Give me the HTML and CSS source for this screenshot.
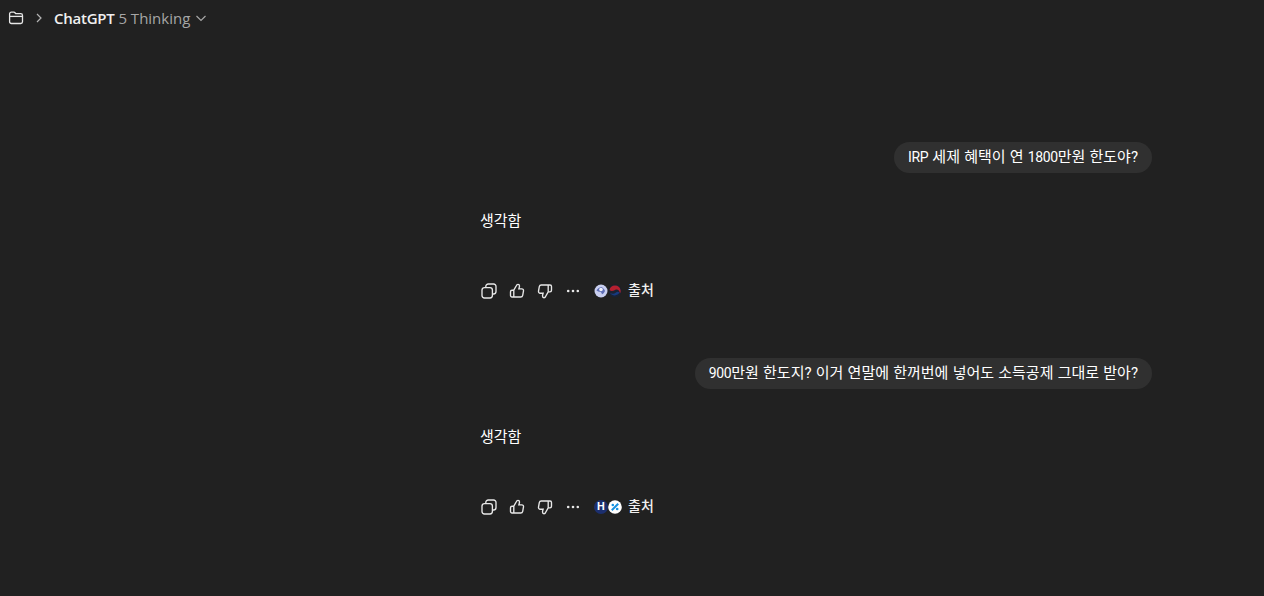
FILE: index.html
```html
<!DOCTYPE html>
<html lang="ko">
<head>
    <meta charset="UTF-8">
    <meta name="viewport" content="width=device-width, initial-scale=1.0">
    <title>ChatGPT</title>
    <link rel="stylesheet" href="styles.css">
</head>
<body>
    <header class="topbar">
        <svg class="folder" width="16" height="16" viewBox="0 0 16 16" fill="none" stroke="currentColor" stroke-width="1.3">
            <path d="M1.600 5V4a1.800 1.800 0 0 1 1.800-1.800h2.400c.6 0 1 .3 1.400.8l.5.7h5a1.800 1.800 0 0 1 1.800 1.800v6.200a1.800 1.800 0 0 1-1.800 1.800H3.400a1.800 1.800 0 0 1-1.800-1.800z"/>
            <path d="M1.600 6.400h12.800"/>
        </svg>
        <svg class="crumb" width="12" height="12" viewBox="0 0 12 12" fill="none" stroke="currentColor" stroke-width="1.2">
            <path d="M4 2l4 4-4 4"/>
        </svg>
        <span class="model"><b>ChatGPT</b> 5 Thinking</span>
        <svg class="caret" width="12" height="12" viewBox="0 0 12 12" fill="none" stroke="currentColor" stroke-width="1.2">
            <path d="M1.500 4l4.500 4.500L10.500 4"/>
        </svg>
    </header>

    <main class="thread">
        <section class="turn">
            <div class="user-row"><div class="bubble"><span class="latin">IRP</span> 세제 혜택이 연 <span class="latin">1800</span>만원 한도야?</div></div>
            <p class="thought">생각함</p>
            <div class="actions">
                <button class="icon-btn">
                    <svg width="16" height="16" viewBox="0 0 16 16" fill="none" stroke="currentColor" stroke-width="1.35"><rect x="1" y="4.600" width="10.400" height="10.400" rx="2.400"/><path d="M4.800 4.600V3.400A2.400 2.400 0 0 1 7.200 1h5.400A2.400 2.400 0 0 1 15 3.400v5.200a2.400 2.400 0 0 1-2.400 2.400h-1.200"/></svg>
                </button>
                <button class="icon-btn">
                    <svg width="16" height="16" viewBox="0 0 16 16" fill="none" stroke="currentColor" stroke-width="1.35"><path d="M4.800 7.200 7.300 2.800c.3-.9 1-1.500 1.700-1.500 1 0 1.500.8 1.500 1.800 0 .9-.3 1.800-.6 2.700h2.900c1.100 0 1.900 1 1.700 2.100l-.8 4.400c-.2 1-1 1.700-2 1.700H3a1.500 1.500 0 0 1-1.500-1.500V8.700A1.500 1.500 0 0 1 3 7.200h1.800v7.300"/></svg>
                </button>
                <button class="icon-btn">
                    <svg width="16" height="16" viewBox="0 0 16 16" fill="none" stroke="currentColor" stroke-width="1.35"><path d="M11.200 8.800 8.700 13.200c-.3.900-1 1.500-1.700 1.500-1 0-1.500-.8-1.500-1.800 0-.9.3-1.800.6-2.700H3.200c-1.100 0-1.900-1-1.700-2.100l.8-4.400c.2-1 1-1.700 2-1.700H13a1.500 1.500 0 0 1 1.500 1.500v3.800A1.500 1.500 0 0 1 13 8.800h-1.800V1.500"/></svg>
                </button>
                <button class="icon-btn">
                    <svg width="16" height="16" viewBox="0 0 16 16" fill="currentColor"><circle cx="3.200" cy="8" r="1.300"/><circle cx="8" cy="8" r="1.300"/><circle cx="12.800" cy="8" r="1.300"/></svg>
                </button>
                <button class="sources">
                    <span class="favicons">
                        <svg class="fav" width="14" height="14" viewBox="0 0 14 14"><circle cx="7" cy="7" r="6.500" fill="#c9cff0"/><path d="M2.500 6.500C3.500 4.500 5 3.500 7.500 3c1.500 1 3 2 3.500 4-.8 2-2 3-3 3.200C7.500 8.800 7 8 6 7.800S3.500 7.500 2.500 6.500z" fill="#5f6fb8"/><circle cx="7" cy="5.500" r="1.800" fill="#f2f3fb"/></svg>
                        <svg class="fav" width="14" height="14" viewBox="0 0 14 14"><circle cx="7" cy="7" r="6.500" fill="#1a2233"/><path d="M1.500 6A5.600 5.600 0 0 1 12.500 6c.4 1.500 0 2.500-.6 3.500-.2-3-2.500-4.700-4.900-3.500C5 7 3 7.500 1.500 6z" fill="#b5202f"/><path d="M2 9c2 1.300 4.500.8 6-.6 1-.9 2.500-.8 3.500.2A5.600 5.600 0 0 1 2 9z" fill="#173a80"/></svg>
                    </span>
                    <span class="sources-label">출처</span>
                </button>
            </div>
        </section>

        <section class="turn">
            <div class="user-row"><div class="bubble"><span class="latin">900</span>만원 한도지? 이거 연말에 한꺼번에 넣어도 소득공제 그대로 받아?</div></div>
            <p class="thought">생각함</p>
            <div class="actions">
                <button class="icon-btn">
                    <svg width="16" height="16" viewBox="0 0 16 16" fill="none" stroke="currentColor" stroke-width="1.35"><rect x="1" y="4.600" width="10.400" height="10.400" rx="2.400"/><path d="M4.800 4.600V3.400A2.400 2.400 0 0 1 7.200 1h5.400A2.400 2.400 0 0 1 15 3.400v5.200a2.400 2.400 0 0 1-2.400 2.400h-1.200"/></svg>
                </button>
                <button class="icon-btn">
                    <svg width="16" height="16" viewBox="0 0 16 16" fill="none" stroke="currentColor" stroke-width="1.35"><path d="M4.800 7.200 7.300 2.800c.3-.9 1-1.500 1.700-1.500 1 0 1.500.8 1.500 1.800 0 .9-.3 1.800-.6 2.700h2.900c1.100 0 1.900 1 1.700 2.100l-.8 4.400c-.2 1-1 1.700-2 1.700H3a1.500 1.500 0 0 1-1.500-1.500V8.700A1.500 1.500 0 0 1 3 7.200h1.800v7.300"/></svg>
                </button>
                <button class="icon-btn">
                    <svg width="16" height="16" viewBox="0 0 16 16" fill="none" stroke="currentColor" stroke-width="1.35"><path d="M11.200 8.800 8.700 13.200c-.3.900-1 1.500-1.700 1.500-1 0-1.500-.8-1.500-1.800 0-.9.3-1.800.6-2.700H3.200c-1.100 0-1.900-1-1.700-2.100l.8-4.400c.2-1 1-1.700 2-1.700H13a1.500 1.500 0 0 1 1.500 1.500v3.800A1.500 1.500 0 0 1 13 8.800h-1.800V1.500"/></svg>
                </button>
                <button class="icon-btn">
                    <svg width="16" height="16" viewBox="0 0 16 16" fill="currentColor"><circle cx="3.200" cy="8" r="1.300"/><circle cx="8" cy="8" r="1.300"/><circle cx="12.800" cy="8" r="1.300"/></svg>
                </button>
                <button class="sources">
                    <span class="favicons">
                        <span class="fav fav-h">H</span>
                        <svg class="fav" width="14" height="14" viewBox="0 0 14 14"><circle cx="7" cy="7" r="6.800" fill="#fff"/><path d="M3.800 10.200l6.400-6.400" stroke="#1590e0" stroke-width="2"/><circle cx="4.800" cy="5" r="1.300" fill="#1590e0"/><circle cx="9.200" cy="9" r="1.300" fill="#1590e0"/></svg>
                    </span>
                    <span class="sources-label">출처</span>
                </button>
            </div>
        </section>
    </main>
</body>
</html>
```

FILE: styles.css
```css
body {
    margin: 0;
    height: 596px;
    overflow: hidden;
    background-color: #212121;
    color: #fff;
    font-family: Roboto, "Noto Sans CJK KR", sans-serif;
    font-size: 15px;
}

.topbar {
    display: flex;
    align-items: center;
    height: 36px;
    padding-left: 8px;
    color: #e8e8e8;
}

.crumb {
    margin-left: 9px;
    color: #b4b4b4;
}

.model {
    margin-left: 9px;
    font-family: "Open Sans", sans-serif;
    font-size: 15px;
    color: #a6a6a6;
}

.model b {
    font-weight: 600;
    letter-spacing: -0.25px;
    color: #f0f0f0;
}

.caret {
    margin-left: 5px;
    color: #a6a6a6;
}

.thread {
    width: 672px;
    margin-left: 480px;
    padding-top: 106px;
}

.turn {
    height: 216px;
}

.user-row {
    display: flex;
    justify-content: flex-end;
}

.bubble {
    height: 31px;
    line-height: 30px;
    padding: 0 14px;
    border-radius: 16px;
    background-color: #303030;
    white-space: nowrap;
    word-spacing: 0.5px;
}

.latin {
    font-size: 14px;
    letter-spacing: -0.4px;
}

.thought {
    margin: 36px 0 0;
    line-height: 24px;
}

.actions {
    display: flex;
    align-items: center;
    height: 28px;
    margin: 44px 0 0 -5px;
}

.icon-btn {
    display: flex;
    align-items: center;
    justify-content: center;
    width: 28px;
    height: 28px;
    padding: 0;
    border: none;
    background: none;
    color: #e8e8e8;
}

.sources {
    display: flex;
    align-items: center;
    gap: 6px;
    margin-left: 7px;
    padding: 0;
    border: none;
    background: none;
    color: #f0f0f0;
    font-family: inherit;
    font-size: 14px;
    font-weight: 500;
}

.sources-label {
    line-height: 20px;
    margin-top: -2px;
}

.favicons {
    display: flex;
}

.fav {
    display: block;
    width: 14px;
    height: 14px;
}

.fav-h {
    border-radius: 50%;
    background-color: #1c2f6e;
    color: #fff;
    font-size: 11px;
    font-weight: 700;
    line-height: 14px;
    text-align: center;
}
```
